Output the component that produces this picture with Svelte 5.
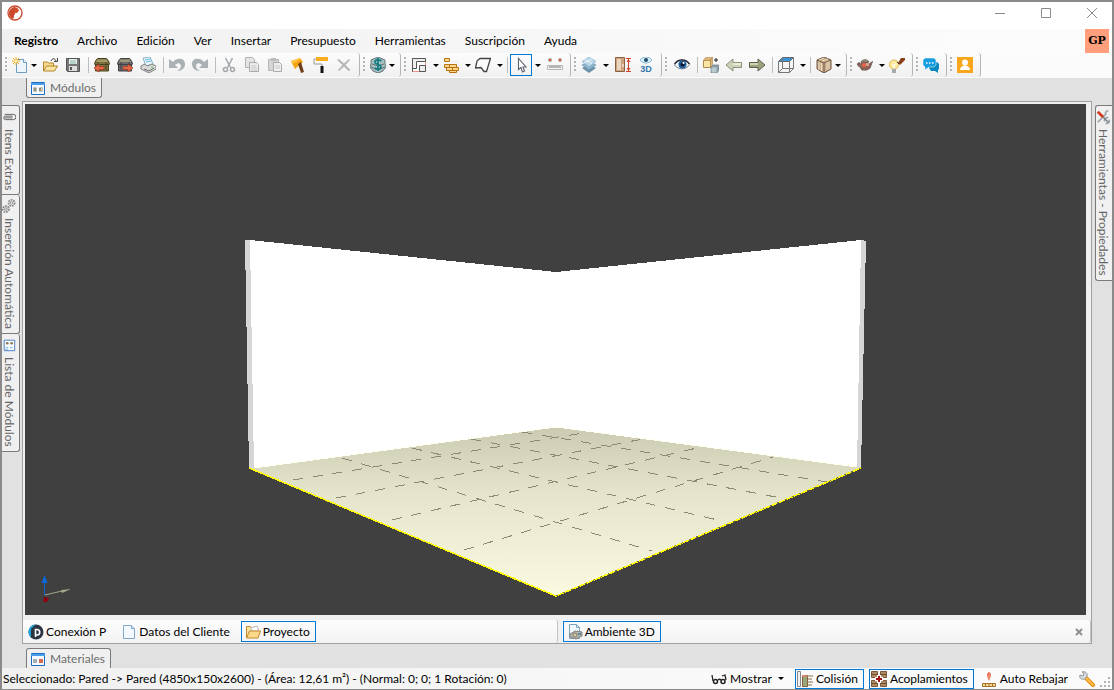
<script>
  let tool = "select";
  let page = "proyecto";
  let collision = true;
  let couplings = true;

  const menus = [
    "Registro",
    "Archivo",
    "Edición",
    "Ver",
    "Insertar",
    "Presupuesto",
    "Herramientas",
    "Suscripción",
    "Ayuda",
  ];

  // drop: "menu" = arrow close to the icon, "split" = separate arrow
  const bands = [
    [
      { icon: "new", label: "Nuevo", drop: "menu" },
      { icon: "open", label: "Abrir" },
      { icon: "save", label: "Guardar" },
      { sep: true },
      { icon: "chestIn", label: "Importar" },
      { icon: "chestOut", label: "Exportar" },
      { icon: "print", label: "Imprimir" },
      { sep: true },
      { icon: "undo", label: "Deshacer" },
      { icon: "redo", label: "Rehacer" },
      { sep: true },
      { icon: "cut", label: "Cortar" },
      { icon: "copy", label: "Copiar" },
      { icon: "paste", label: "Pegar" },
      { icon: "brush", label: "Pincel" },
      { icon: "roller", label: "Rodillo" },
      { icon: "remove", label: "Eliminar" },
    ],
    [{ icon: "money", label: "Precios", drop: "menu" }],
    [
      { icon: "walls", label: "Paredes", drop: "split" },
      { icon: "bricks", label: "Ladrillos", drop: "split" },
      { icon: "shape", label: "Forma", drop: "split" },
      { sep: true },
      { icon: "select", label: "Seleccionar", drop: "split" },
      { icon: "measure", label: "Medir", wide: true },
    ],
    [
      { icon: "layers", label: "Capas", drop: "split" },
      { icon: "door", label: "Altura", wide: true },
      { icon: "view3d", label: "Ver 3D" },
    ],
    [
      { icon: "eye", label: "Mostrar u ocultar", wide: true },
      { sep: true },
      { icon: "swap", label: "Reemplazar" },
      { icon: "prev", label: "Anterior" },
      { icon: "next", label: "Siguiente" },
      { sep: true },
      { icon: "wire", label: "Vista", drop: "split" },
      { sep: true },
      { icon: "wood", label: "Material", drop: "menu" },
    ],
    [
      { icon: "teapot", label: "Render", drop: "split" },
      { icon: "light", label: "Iluminación" },
    ],
    [{ icon: "chat", label: "Chat" }],
    [{ icon: "user", label: "Usuario" }],
  ];

  const sideTabs = [
    { icon: "clip", label: "Itens Extras" },
    { icon: "gears", label: "Inserción Automática" },
    { icon: "list", label: "Lista de Módulos" },
  ];

  const pages = [
    { id: "conexion", icon: "conexion", label: "Conexión P" },
    { id: "datos", icon: "page", label: "Datos del Cliente" },
    { id: "proyecto", icon: "folder", label: "Proyecto" },
  ];

  // floor grid, x1 y1 x2 y2
  const grid = [
    [317, 354, 627, 447],
    [387, 344, 697, 417],
    [446, 335, 756, 394],
    [497, 328, 802, 378],
    [268, 376, 558, 329],
    [311, 394, 618, 335],
    [367, 416, 676, 343],
    [439, 446, 748, 353],
  ];

  const chest = (a, b) =>
    `<path d="M.5 7l1-3 2-2.500h9l2 2.500 1 3-1 1v6h-13V8z" fill="${a}" stroke="${b}"/><path d="M3.500 2.500h9l1.500 2.500H2z" fill="#b5ab7c" opacity=".7"/><path d="M1 7.500h14M4 5v8M12 5v8" stroke="${b}" fill="none"/><path d="M6 1.500h4" stroke="${b}"/>`;

  const icons = {
    logo: `<circle cx="8" cy="8" r="7" fill="#fff" stroke="#c9492c" stroke-width="1.300"/><path d="M8 2.500a5.500 5.500 0 0 0-3 10.200l1-3h2V8h2l2-2.500c-.5-2-2-3-4-3z" fill="#d2522f"/><path d="M3 5l4-3 3 1-3 4v5l-1 2a6 6 0 0 1-3-9z" fill="#c9492c"/>`,
    new: `<path d="M4.500 2.500h7l3 3v10h-10z" fill="#eef6fc" stroke="#6d9cc0"/><path d="M11.500 2.500v3h3" fill="#fff" stroke="#6d9cc0"/><path d="M4 0v8M0 4h8M1 1l6 6M7 1L1 7" stroke="#f3ab25"/><circle cx="4" cy="4" r="1.500" fill="#fff2a8"/>`,
    open: `<path d="M1.500 14V5h4l1 1h5v3" fill="#f7d98d" stroke="#b38529"/><path d="M1.500 14l3-5h11l-3 5z" fill="#fae3a2" stroke="#b38529"/><path d="M9 4c1-3 4-3 5 0M15.500 1v3.500H12" fill="none" stroke="#444"/>`,
    save: `<path d="M1.500 1.500h13v13h-12l-1-1z" fill="#777" stroke="#555"/><path d="M4 2h8v5H4z" fill="#e8eef0"/><path d="M5 4h6M5 6h6" stroke="#8b9"/><path d="M4 9h8v5H4z" fill="#ddd"/><path d="M5 10h2v3H5z" fill="#555"/>`,
    chestIn: chest("#7d7240", "#4b431f") + `<path d="M0 11l5-4v2.500h5v3H5V15z" fill="#e8694a" stroke="#a33a20" stroke-width=".7"/>`,
    chestOut: chest("#6c6c70", "#3f3f44") + `<path d="M16 11l-5-4v2.500H6v3h5V15z" fill="#e8694a" stroke="#a33a20" stroke-width=".7"/>`,
    print: `<path d="M3 1l7-1 3 7-7 2z" fill="#eaf7fd" stroke="#8bb3c7"/><path d="M5 3l5-1M6 5l5-1" stroke="#62b5d8"/><path d="M1 9l4-2 2 2 5-2 4 2v3l-7 4-8-4z" fill="#d9d9d9" stroke="#808080"/><path d="M4 12l5 2 5-3" stroke="#666" fill="none"/><circle cx="12" cy="10" r=".8" fill="#3c3"/>`,
    undo: `<path d="M0 2v9h9L6 8c3-3 6-2 6 1 0 2-2 4-4 5 5 0 8-3 8-7C16 1 8 0 4 5z" fill="#a9b1b4"/>`,
    redo: `<path d="M16 2v9H7l3-3C7 5 4 6 4 9c0 2 2 4 4 5-5 0-8-3-8-7C0 1 8 0 12 5z" fill="#a9b1b4"/>`,
    cut: `<path d="M4.500 1l5 9.500M11.500 1l-5 9.500" stroke="#a2a8ac" stroke-width="1.500"/><circle cx="4.500" cy="12.500" r="2" fill="none" stroke="#a2a8ac" stroke-width="1.500"/><circle cx="11.500" cy="12.500" r="2" fill="none" stroke="#a2a8ac" stroke-width="1.500"/>`,
    copy: `<path d="M1.500.500h7l2 2v8h-9z" fill="#e4e4e4" stroke="#b4b4b4"/><path d="M5.500 5.500h7l2 2v7h-9z" fill="#ececec" stroke="#aaa"/><path d="M7 9h5M7 11h6M7 13h6" stroke="#c8c8c8"/>`,
    paste: `<path d="M1.500 2.500h10v11h-10z" fill="#d6d6d6" stroke="#b8b8b8"/><path d="M4 1h5v3H4z" fill="#bbb"/><path d="M6.500 5.500h6l2 2v7h-8z" fill="#efefef" stroke="#aaa"/><path d="M8 9h5M8 11h5" stroke="#c8c8c8"/>`,
    brush: `<path d="M1 4l9-3 3 4-8 7z" fill="#f5a511"/><path d="M1 4l9-3 1 1-9 5z" fill="#ffc64a"/><path d="M8 7l3-2 3 10-3 1z" fill="#70401a"/>`,
    roller: `<path d="M3 0h12v4H3z" fill="#f8ae20"/><path d="M3 2H1v5h8v3" fill="none" stroke="#999"/><path d="M7.500 9h3v7h-3z" fill="#111"/>`,
    remove: `<path d="M1 3l2-1 5 4.500L13 2l1 1-4.500 5 5 5-2 1L8 9.500 3 14l-1-1 4.500-5z" fill="#b5b5b5"/>`,
    money: `<path d="M1 3l7-3 7 3v4l1 3-3 4-5 2-5-2-3-4 1-3z" fill="#a9bfc1" stroke="#65787d"/><path d="M1 10l7 3 7-3M2 7l6 2 6-2" fill="none" stroke="#5d7378"/><path d="M11.500 4C9 2 4.500 2.500 5 5.500c.5 2.500 6 1.500 6 4.500 0 2.500-4 3-6.500 1M8 1v13" fill="none" stroke="#177d83" stroke-width="1.800"/>`,
    walls: `<path d="M1.500 1.500h13v13h-13z" fill="#fff" stroke="#f0977b"/><path d="M1.500 14.500v-13h13v3h-9v7h-4zM8.500 14.500v-6h6v6z" fill="#eee" stroke="#555"/>`,
    bricks: `<path d="M1.500 1.500h5v3h-5zM1.500 7.500h5v3h-5zM6.500 7.500h7v3h-7zM3.500 10.500h6v3h-6zM9.500 10.500h6v3h-6zM6.500 13.500h7v2h-7z" fill="#ffd78c" stroke="#b9700f"/><path d="M9 4.500h6" stroke="#ddd" stroke-dasharray="1 1"/>`,
    shape: `<path d="M5 1.500h10.500l-4 13H9L6 10.500.500 11 2 4z" fill="#fcfcfc" stroke="#444" stroke-width="1.300"/>`,
    select: `<path d="M5.500 1.500v11l2.500-2 1.500 4.500 2-1L10 10h3z" fill="#fff" stroke="#5c6470" stroke-width="1.100"/>`,
    measure: `<path d="M.5 8.500h15v4H.5z" fill="#f4f4f4" stroke="#b5b5b5"/><path d="M3 9v2M5 9v2M7 9v2M9 9v2M11 9v2M13 9v2" stroke="#777"/><circle cx="3" cy="3" r="2" fill="#a9aaa9"/><circle cx="13" cy="3" r="2" fill="#a9aaa9"/><path d="M3 2v2M13 2v2" stroke="#e0592f" stroke-width="2"/>`,
    layers: `<path d="M1 11l7-4 7 4-7 5z" fill="#6c91aa"/><path d="M1 8l7-4 7 4-7 5z" fill="#8db4cb" stroke="#6790aa" stroke-width=".6"/><path d="M1 4.500L8 0l7 4.500L8 10z" fill="#b9d8e8" stroke="#7ba6bf" stroke-width=".6"/><path d="M4 2.500l7 4M3 6l8-4" stroke="#fff" stroke-width=".7"/>`,
    door: `<path d="M.5.500h9v14h-9z" fill="#cfa37f" stroke="#8b6144"/><path d="M2 2h4v11H2z" fill="#e9d4be"/><path d="M8 7v3" stroke="#fff"/><path d="M11 1.500h5M11 14.500h5M13.500 2v12" stroke="#cf402b"/><path d="M11.500 5l2-3 2 3zM11.500 11l2 3 2-3z" fill="#cf402b"/>`,
    view3d: `<path d="M2 3c3-4 9-4 12 0-3 4-9 4-12 0z" fill="#d6eef7" stroke="#85bad2"/><circle cx="8" cy="3" r="2" fill="#234a68"/><text x="8" y="15" font-family="Liberation Sans, sans-serif" font-size="9" font-weight="bold" text-anchor="middle" fill="#2f78ad">3D</text>`,
    eye: `<path d="M.5 8C4 2 12 2 15.500 7.500 12 13.500 4 13 .5 8z" fill="#f2f7f9" stroke="#71828a"/><circle cx="8.500" cy="7.500" r="4" fill="#245e9d"/><circle cx="8.500" cy="7.500" r="2" fill="#08182c"/><circle cx="9.500" cy="6" r="1" fill="#fff"/><path d="M.5 7C4 1.500 12 1.500 15.500 7" stroke="#223" stroke-width="1.300" fill="none"/>`,
    swap: `<path d="M.5 3.500h7v7h-7z" fill="#fae6a7" stroke="#b08a4a"/><path d="M.5 3.500l2-3h7l-2 3zM7.500 3.500l2-3v7l-2 3z" fill="#dcb77a" stroke="#b08a4a" stroke-width=".6"/><path d="M8 10l2-2h6v5l-2 3H8z" fill="#8ca2a9" stroke="#5c747c" stroke-width=".6"/><path d="M8.500 10.500h5v5h-5z" fill="#b9cacd"/><path d="M11 3h4M13 1v4" stroke="#222" fill="none"/>`,
    prev: `<path d="M0 8l7-6v3.500h8.500v5H7V14z" fill="#ccd2b5" stroke="#8a927b"/><path d="M7 7h8" stroke="#f2f5df" stroke-width="1.500"/>`,
    next: `<path d="M16 8L9 2v3.500H.5v5H9V14z" fill="#9ba27b" stroke="#59614c"/><path d="M1 7h8" stroke="#dfe3c9" stroke-width="1.500"/>`,
    wire: `<path d="M.5 4.500l4-4h11l-4 4z" fill="#3b93d8" stroke="#666"/><path d="M.5 4.500v11h11v-11M11.500 15.500l4-4V.5M4.500 1v10.500h11M4.500 11.500l-4 4" fill="none" stroke="#777"/>`,
    wood: `<path d="M1 3l7-3 7 3v9l-7 4-7-4z" fill="#c9ac8a" stroke="#6e5643"/><path d="M1 3l7 3 7-3M8 6v10" fill="none" stroke="#6e5643"/><path d="M3 5v8M5.500 6v8M11 5v8M13 4v8" stroke="#eadbc2"/><path d="M3 3l5-2M6 4l6-2" stroke="#eadbc2"/>`,
    teapot: `<path d="M3 6C-1 5 0 10 4 10M11 8l4.500-3.500L13 11l-3 2H5C2 10 3 6 5 5h6z" fill="#946050" stroke="#6b5d58"/><path d="M4 5c1-3 7-3 8 0z" fill="#b2a08b" stroke="#6b6258"/><circle cx="7" cy="8" r="2" fill="#ed654b"/><path d="M9 6h3v3H9z" fill="#d4a18f"/>`,
    light: `<circle cx="5" cy="7.500" r="4.500" fill="#ffeba5" stroke="#e1b348"/><path d="M3.500 7h3l-1 5h-1z" fill="#fffce6"/><path d="M3 12h4v4H3z" fill="#a6aaae"/><path d="M9 6l3-5h4v2l-5 5z" fill="#8a3f16"/><path d="M8 5l2 2" stroke="#333"/>`,
    chat: `<path d="M6 5h8l2 2v5l-1 1v3l-3-2H8l-2-3z" fill="#0e89bf"/><path d="M2 1h9l2 2v5l-2 2H6l-4 3v-3l-2-2V3z" fill="#169ee0" stroke="#fff" stroke-width=".5"/><path d="M3 6h1.500M6 6h1.500M9 6h1.500" stroke="#fff" stroke-width="1.500"/>`,
    user: `<path d="M0 0h16v16H0z" fill="#f7a61d"/><circle cx="8" cy="5.500" r="3" fill="#fff"/><path d="M3 13c0-6 10-6 10 0z" fill="#fff"/>`,
    modules: `<path d="M1.500 2.500h13v12h-13z" fill="#f6faff" stroke="#1c6fc0"/><path d="M1 3h14v2H1z" fill="#4a9ee8"/><path d="M3.500 7.500h3v4h-3zM9.500 7.500h3v4h-3z" fill="#d9d1b5" stroke="#b9c4be"/><path d="M5 8v3M10 8v3" stroke="#554c35"/>`,
    materials: `<path d="M1.500 2.500h13v12h-13z" fill="#f6faff" stroke="#1c6fc0"/><path d="M1 3h14v2H1z" fill="#4a9ee8"/><path d="M3 8h4v4H3z" fill="#a3adb2"/><path d="M9 8h4v4H9z" fill="#d9694f"/>`,
    clip: `<path d="M3 5h10a3 3 0 0 1 0 6H4a2 2 0 0 1 0-4h8M3 9h9" fill="none" stroke="#555"/>`,
    gears: `<circle cx="11" cy="4.500" r="3.500" fill="none" stroke="#888" stroke-width="2" stroke-dasharray="2 1"/><circle cx="11" cy="4.500" r="1.500" fill="none" stroke="#888"/><circle cx="4.500" cy="11.500" r="3.500" fill="none" stroke="#888" stroke-width="2" stroke-dasharray="2 1"/><circle cx="4.500" cy="11.500" r="1.500" fill="none" stroke="#888"/>`,
    list: `<path d="M2.500 2.500h12v12h-12z" fill="#f7fbff" stroke="#3d76bd"/><circle cx="6" cy="6" r="1.500" fill="#8c7850"/><circle cx="11" cy="6" r="1.500" fill="#8c7850"/><path d="M4 11h3M9 11h3M4 13h3" stroke="#69b3d4"/>`,
    tools: `<path d="M14 9a3 3 0 0 0-4 4M15 11a3 3 0 0 1-4 4M14 1a3 3 0 0 0-3 4L2 14" stroke="#9aa5ad" stroke-width="2" fill="none"/><path d="M8 8l6 6" stroke="#777" stroke-width="1.500"/><path d="M2 2l6 6" stroke="#d43a1d" stroke-width="3"/>`,
    conexion: `<circle cx="8" cy="8" r="7.500" fill="#2d3540"/><path d="M8 .5a7.500 7.500 0 0 0-5 13V5l3-3z" fill="#19a3dc"/><path d="M7.500 13V5.500h1.500a2.500 2.500 0 1 1 0 5.500H7.500" fill="none" stroke="#fff" stroke-width="1.600"/>`,
    page: `<path d="M2.500 1.500h8l3 3v10h-11z" fill="#f3f9fe" stroke="#7ea7ca"/><path d="M10.500 1.500v3h3" fill="#d4e7f5" stroke="#7ea7ca"/>`,
    folder: `<path d="M1.500 14V2.500h4l1.500 2h6v3" fill="#fbe3a6" stroke="#c4882d"/><path d="M6 4l6-2 2 5H6z" fill="#fff" stroke="#b8b8b8"/><path d="M1.500 14l3-7h11l-2.500 7z" fill="#fcd88a" stroke="#c4882d"/>`,
    ambient: `<path d="M2.500.500h7l3 3v11h-10z" fill="#f3f9fe" stroke="#78a5bf"/><path d="M9.500.500v3h3" fill="none" stroke="#78a5bf"/><path d="M3 10l5-3 7 1v4l-6 3-6-2z" fill="#b7b6ad" stroke="#7f7f7c"/><circle cx="8" cy="11" r="2" fill="#d9cab0" stroke="#85796a"/><path d="M11 9h3v2h-3z" fill="#58889e"/>`,
    glasses: `<path d="M1 4l1 6M7 9c1-1 2-1 3 0M11 5l3-1 1 5" fill="none" stroke="#222" stroke-width="1.300"/><circle cx="4.500" cy="10.500" r="2" fill="#fff" stroke="#222" stroke-width="1.500"/><circle cx="12" cy="10.500" r="2" fill="#fff" stroke="#222" stroke-width="1.500"/>`,
    collision: `<path d="M.5.500h3v15h-3z" fill="#f1f1f1" stroke="#8a8a8a"/><path d="M5.500 4.500h5v11h-5z" fill="#9aa677" stroke="#84603f"/><path d="M5 4h4l2 2H5z" fill="#d88767"/><path d="M11 5h5M11 8h4M11 11h5M11 14h4" stroke="#8a6a47"/>`,
    couplings: `<path d="M.5.500h6v6h-6zM9.500.500h6v6h-6zM.5 9.500h6v6h-6zM9.500 9.500h6v6h-6z" fill="#b08862" stroke="#7a5a3e"/><path d="M0 3.500h7M9 3.500h7M0 12.500h7M9 12.500h7" stroke="#6a4c33"/><path d="M4 8h8M8 4v8" stroke="#fff" stroke-width="4"/><path d="M5 8h6M8 5v6" stroke="#a80d12" stroke-width="2"/>`,
    rebajar: `<path d="M1.500 12.500h13v3h-13z" fill="#f8d795" stroke="#a5722a"/><path d="M4.500 13v2M8 13v2M11.500 13v2" stroke="#a5722a"/><path d="M8 1c3 2 2 4 0 9-2-5-3-7 0-9z" fill="#e0603f"/><path d="M8 3v5" stroke="#ffb199"/>`,
    wrench: `<path d="M7 7l7 7" stroke="#e88a15" stroke-width="4" stroke-linecap="round"/><path d="M7 7l7 7" stroke="#ffbd45" stroke-width="2" stroke-linecap="round"/><path d="M1 4l3 1 1-3-2-1c3-1 6 1 5 4L6 8C2 9 0 7 1 4z" fill="#d8dcdf" stroke="#92999d"/>`,
  };
</script>

{#snippet icon(name)}
  <svg class="icon" viewBox="0 0 16 16" aria-hidden="true">{@html icons[name]}</svg>
{/snippet}

<div class="window">
  <header class="titlebar">
    {@render icon("logo")}
    <div class="controls">
      <button aria-label="Minimizar"><svg viewBox="0 0 12 12"><path d="M1 6.500h10" /></svg></button>
      <button aria-label="Maximizar"><svg viewBox="0 0 12 12"><path d="M1.500 1.500h9v9h-9z" /></svg></button>
      <button aria-label="Cerrar"><svg viewBox="0 0 12 12"><path d="M1 1l10 10M11 1L1 11" /></svg></button>
    </div>
  </header>

  <nav class="menubar">
    {#each menus as menu, i}
      <button class:strong={i === 0}>{menu}</button>
    {/each}
    <button class="account">GP</button>
  </nav>

  <div class="toolbar">
    {#each bands as band}
      <div class="band">
        <span class="grip"></span>
        {#each band as item}
          {#if item.sep}
            <span class="sep"></span>
          {:else}
            <button
              class="tool {item.drop || ''}"
              class:wide={item.wide}
              aria-label={item.label}
              aria-pressed={tool === item.icon}
              on:click={() => (tool = item.icon)}
            >
              <span class="face" class:active={tool === item.icon}>{@render icon(item.icon)}</span>
              {#if item.drop}<span class="arrow"></span>{/if}
            </button>
          {/if}
        {/each}
      </div>
    {/each}
  </div>

  <div class="dock-top">
    <button class="dock-tab top">{@render icon("modules")}Módulos</button>
  </div>

  <main class="body">
    <div class="side left">
      {#each sideTabs as tab}
        <button class="side-tab">{@render icon(tab.icon)}<span>{tab.label}</span></button>
      {/each}
    </div>

    <section class="workspace">
      <svg class="scene" viewBox="0 0 1061 511" role="img" aria-label="Ambiente 3D">
        <defs>
          <linearGradient id="floor" x1="0" y1="323" x2="0" y2="493" gradientUnits="userSpaceOnUse">
            <stop offset="0" stop-color="#cbcbb3" />
            <stop offset="0.400" stop-color="#e5e5cb" />
            <stop offset="1" stop-color="#fafae2" />
          </linearGradient>
        </defs>
        <g shape-rendering="crispEdges">
          <path d="M220 136h5l4 229h-5zM836 136l5 1-5 227h-4z" fill="#d6d6d6" />
          <path d="M225 136l306 32 305-32-4 229-301-42-302 42z" fill="#fff" />
          <path d="M225 365l306-42 305 41-305 128z" fill="url(#floor)" />
          <path d="M229 364l302-41 301 40" fill="none" stroke="#fffff0" />
          {#each grid as [x1, y1, x2, y2]}
            <line {x1} {y1} {x2} {y2} stroke="#8b8b75" stroke-dasharray="10 10" />
          {/each}
          <path d="M224 364l307 128 305-128" fill="none" stroke="#ff0" stroke-width="1.500" />
          <path d="M531 492l305-128" fill="none" stroke="#77773c" stroke-dasharray="2 6" />
        </g>
        <path d="M19.500 491v-13" stroke="#0a67d8" />
        <path d="M19.500 471l3 8h-6z" fill="#0a67d8" />
        <path d="M20 491l17-4" stroke="#a3a98a" />
        <path d="M46 485l-9 4-1-3z" fill="#a3a98a" />
        <path d="M19 493l5 1-2 4h-4z" fill="#8c0010" />
      </svg>

      <div class="pages">
        <div class="strip">
          {#each pages as p}
            <button class="page-tab" class:active={page === p.id} on:click={() => (page = p.id)}>
              {@render icon(p.icon)}{p.label}
            </button>
          {/each}
        </div>
        <div class="strip">
          <button class="page-tab active">{@render icon("ambient")}Ambiente 3D</button>
          <button class="close" aria-label="Cerrar ambiente">
            <svg viewBox="0 0 8 8"><path d="M1 1l6 6M7 1L1 7" /></svg>
          </button>
        </div>
      </div>
    </section>

    <div class="side right">
      <button class="side-tab">{@render icon("tools")}<span>Herramientas - Propiedades</span></button>
    </div>
  </main>

  <div class="dock-bottom">
    <button class="dock-tab bottom">{@render icon("materials")}Materiales</button>
  </div>

  <footer class="status">
    <span class="message">Seleccionado: Pared -&gt; Pared (4850x150x2600) - (Área: 12,61 m²) - (Normal: 0; 0; 1 Rotación: 0)</span>
    <button class="option">{@render icon("glasses")}Mostrar<span class="arrow"></span></button>
    <button class="option" class:active={collision} on:click={() => (collision = !collision)}>
      {@render icon("collision")}Colisión
    </button>
    <button class="option" class:active={couplings} on:click={() => (couplings = !couplings)}>
      {@render icon("couplings")}Acoplamientos
    </button>
    <button class="option">{@render icon("rebajar")}Auto Rebajar</button>
    <button class="settings" aria-label="Configuración">{@render icon("wrench")}</button>
    <svg class="sizer" viewBox="0 0 12 12" aria-hidden="true">
      <path d="M8 0h2v2H8zM8 4h2v2H8zM4 4h2v2H4zM8 8h2v2H8zM4 8h2v2H4zM0 8h2v2H0z" />
    </svg>
  </footer>
</div>

<style>
  :global(body) {
    margin: 0;
  }

  .window {
    box-sizing: border-box;
    display: flex;
    flex-direction: column;
    min-height: 100vh;
    border: 2px solid #8a8a8a;
    background: #e1e1e1;
    font-family: Lato, "Open Sans", sans-serif;
    font-size: 12px;
    line-height: 16px;
    color: #000;
  }

  button {
    margin: 0;
    padding: 0;
    border: 0;
    background: none;
    font: inherit;
    color: inherit;
    white-space: nowrap;
  }

  .icon {
    display: block;
    flex: none;
    width: 16px;
    height: 16px;
  }

  .arrow {
    flex: none;
    border: 3px solid transparent;
    border-top-color: #000;
    border-bottom: 0;
  }

  .titlebar {
    box-sizing: border-box;
    display: flex;
    align-items: center;
    justify-content: space-between;
    height: 27px;
    padding: 0 0 5px 5px;
    background: #fff;
  }

  .controls {
    display: flex;
    gap: 6px;
    height: 22px;
  }

  .controls button {
    display: flex;
    align-items: center;
    justify-content: center;
    width: 40px;
  }

  .controls svg {
    width: 12px;
    height: 12px;
    fill: none;
    stroke: #8f8a8a;
  }

  .menubar {
    display: flex;
    align-items: center;
    gap: 19px;
    height: 24px;
    padding: 0 3px 0 12px;
    background: linear-gradient(90deg, #f0f0f0, #fafafa 70%, #fcfcfc);
  }

  .strong {
    font-weight: bold;
  }

  .menubar .account {
    width: 24px;
    height: 24px;
    margin-left: auto;
    background: #ff9f7b;
    font-family: "DejaVu Serif", serif;
    font-size: 11px;
    font-weight: bold;
  }

  .toolbar {
    display: flex;
    align-items: flex-start;
    height: 25px;
    background: #fbfbfb;
  }

  .band {
    display: flex;
    align-items: center;
    height: 24px;
    padding: 0 3px;
    border-right: 1px solid #b5b5b5;
    border-radius: 0 3px 3px 0;
    background: linear-gradient(#fcfcfc, #f0f0f0);
  }

  .grip {
    width: 2px;
    height: 16px;
    margin-right: 2px;
    background: repeating-linear-gradient(#b4b4b4 0 2px, transparent 2px 4px);
  }

  .sep {
    width: 1px;
    height: 16px;
    margin: 0 2px 0 3px;
    background: #bdbdbd;
  }

  .tool {
    display: flex;
    align-items: center;
    width: 23px;
    height: 22px;
  }

  .tool.wide {
    justify-content: center;
    width: 25px;
  }

  .tool.menu {
    width: 30px;
  }

  .tool.split {
    gap: 3px;
    width: 32px;
  }

  .face {
    box-sizing: border-box;
    padding: 3px;
    border: 1px solid transparent;
    border-width: 0;
  }

  .face.active,
  .page-tab.active,
  .option.active {
    border: 1px solid #0078d7;
  }

  .face.active {
    padding: 2px;
  }

  .dock-top {
    height: 23px;
    padding-left: 24px;
  }

  .dock-tab {
    display: flex;
    align-items: center;
    gap: 4px;
    height: 20px;
    padding: 0 5px 0 3px;
    border: 1px solid #7a7a7a;
    background: #f0f0f0;
    color: #6d6d6d;
  }

  .dock-tab.top {
    border-top: 0;
    border-radius: 0 0 3px 3px;
  }

  .dock-tab.bottom {
    border-bottom: 0;
    border-radius: 3px 3px 0 0;
  }

  .body {
    display: flex;
    flex: 1;
  }

  .side {
    display: flex;
    flex-direction: column;
    padding-top: 4px;
  }

  .left {
    width: 18px;
    margin-right: 2px;
  }

  .right {
    width: 17px;
    margin-left: 3px;
  }

  .side-tab {
    display: flex;
    flex-direction: column;
    align-items: flex-start;
    gap: 4px;
    padding: 3px 0 4px;
    border: 1px solid #7a7a7a;
    background: #f0f0f0;
    color: #666;
  }

  .side-tab + .side-tab {
    border-top: 0;
  }

  .side-tab span {
    writing-mode: vertical-rl;
    line-height: 15px;
  }

  .left .side-tab {
    border-left: 0;
    border-radius: 0 3px 3px 0;
  }

  .right .side-tab {
    border-right: 0;
    border-radius: 3px 0 0 3px;
  }

  .side .icon {
    width: 14px;
    height: 16px;
  }

  .workspace {
    display: flex;
    flex: 1;
    flex-direction: column;
    border: 1px solid #a0a0a0;
    background: #f0f0f0;
  }

  .scene {
    display: block;
    flex: 1;
    min-height: 0;
    margin: 2px 5px 5px 2px;
    background: #404040;
  }

  .pages {
    display: grid;
    grid-template-columns: 101fr 100fr;
    gap: 4px;
  }

  .strip {
    display: flex;
    gap: 5px;
    height: 23px;
    padding: 1px 0 1px 1px;
    box-sizing: border-box;
    border-right: 1px solid #c4c4c4;
    border-radius: 0 3px 3px 0;
    background: linear-gradient(#fdfdfd, #f2f2f2);
  }

  .page-tab {
    display: flex;
    align-items: center;
    gap: 2px;
    padding: 0 5px 0 3px;
    border: 1px solid transparent;
  }

  .close {
    width: 22px;
    margin-left: auto;
  }

  .close svg {
    width: 8px;
    height: 8px;
    fill: none;
    stroke: #8f8f8f;
    stroke-width: 2px;
  }

  .dock-bottom {
    padding: 4px 0 0 24px;
  }

  .status {
    display: flex;
    align-items: center;
    height: 21px;
    gap: 5px;
    background: linear-gradient(90deg, #f0f0f0, #fafafa 70%);
  }

  .message {
    margin-right: auto;
    padding-left: 1px;
    white-space: nowrap;
  }

  .option {
    display: flex;
    align-items: center;
    gap: 3px;
    height: 20px;
    padding: 0 5px 0 1px;
    border: 1px solid transparent;
    box-sizing: border-box;
  }

  .option .arrow {
    margin-left: 3px;
  }

  .sizer {
    align-self: flex-end;
    width: 12px;
    height: 12px;
    fill: #b0b0b0;
  }
</style>
